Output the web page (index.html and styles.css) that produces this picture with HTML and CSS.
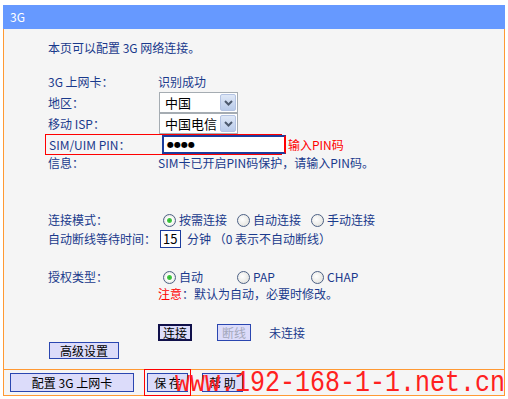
FILE: index.html
```html
<!DOCTYPE html>
<html lang="zh-CN">
<head>
    <meta charset="UTF-8">
    <title>3G</title>
    <link rel="stylesheet" href="styles.css">
</head>
<body>
    <div class="frame">
        <div class="title">3G</div>
        <div class="box">
            <div class="panel">
                <p class="intro">本页可以配置 3G 网络连接。</p>

                <div class="row row-card">
                    <span class="label">3G 上网卡：</span>
                    <span>识别成功</span>
                </div>
                <div class="row row-select">
                    <span class="label">地区：</span>
                    <div class="select">
                        <span class="select-text">中国</span>
                        <span class="select-btn">
                            <svg width="9" height="6" viewBox="0 0 9 6"><path d="M1 1 L4.5 4.5 L8 1" fill="none" stroke="#4d5a6e" stroke-width="2"/></svg>
                        </span>
                    </div>
                </div>
                <div class="row row-select">
                    <span class="label">移动 ISP：</span>
                    <div class="select">
                        <span class="select-text">中国电信</span>
                        <span class="select-btn">
                            <svg width="9" height="6" viewBox="0 0 9 6"><path d="M1 1 L4.5 4.5 L8 1" fill="none" stroke="#4d5a6e" stroke-width="2"/></svg>
                        </span>
                    </div>
                </div>
                <div class="row row-pin">
                    <div class="pin-mark">
                        <span class="label">SIM/UIM PIN：</span>
                        <span class="pin-input">●●●●</span>
                    </div>
                    <span class="hint">输入PIN码</span>
                </div>
                <div class="row row-info">
                    <span class="label">信息：</span>
                    <span>SIM卡已开启PIN码保护，请输入PIN码。</span>
                </div>

                <div class="row row-mode">
                    <span class="label">连接模式：</span>
                    <div class="radios">
                        <span class="radio"><i class="dot on"></i>按需连接</span>
                        <span class="radio"><i class="dot"></i>自动连接</span>
                        <span class="radio"><i class="dot"></i>手动连接</span>
                    </div>
                </div>
                <div class="row row-wait">
                    <span class="label">自动断线等待时间：</span>
                    <div class="wait">
                        <span class="num-input">15</span>
                        <span>分钟 （0 表示不自动断线）</span>
                    </div>
                </div>

                <div class="row row-auth">
                    <span class="label">授权类型：</span>
                    <div class="radios">
                        <span class="radio"><i class="dot on"></i>自动</span>
                        <span class="radio"><i class="dot"></i>PAP</span>
                        <span class="radio"><i class="dot"></i>CHAP</span>
                    </div>
                </div>
                <div class="row row-note">
                    <span class="label"></span>
                    <span><em class="warn">注意</em>：默认为自动，必要时修改。</span>
                </div>

                <div class="row row-btns">
                    <span class="label"></span>
                    <div class="conn">
                        <button class="button button-focus">连接</button>
                        <button class="button button-off">断线</button>
                        <span class="state">未连接</span>
                    </div>
                </div>
                <div class="row-adv">
                    <button class="button button-adv">高级设置</button>
                </div>
            </div>
            <div class="foot">
                <button class="button button-card">配置 3G 上网卡</button>
                <div class="save-mark">
                    <button class="button button-small">保 存</button>
                </div>
                <button class="button button-small">帮 助</button>
            </div>
        </div>
        <div class="watermark">www.192-168-1-1.net.cn</div>
    </div>
</body>
</html>
```

FILE: styles.css
```css
/* Reset */
* {
    box-sizing: border-box;
    margin: 0;
    padding: 0;
}

body {
    background-color: #fff;
    font-family: "Noto Sans CJK SC", "Noto Sans", sans-serif;
    font-size: 12px;
    line-height: 16px;
    color: #1a3a8c;
    overflow: hidden;
}

.frame {
    position: relative;
    width: 502px;
    margin: 5px 0 0 3px;
}

.title {
    height: 24px;
    line-height: 24px;
    padding-left: 7px;
    background-color: #6699ff;
    color: #fff;
}

.box {
    border: 1px solid #ff9933;
    border-top: none;
}

.panel {
    height: 340px;
    padding: 11px 0 0 44px;
    background-color: #f5f5f5;
}

.intro {
    height: 16px;
}

/* Form rows */
.row {
    display: grid;
    grid-template-columns: 110px auto;
    align-items: center;
}

.label {
    white-space: nowrap;
}

.row-card {
    height: 16px;
    margin-top: 18px;
}

.row-select {
    height: 21px;
}

.row-card + .row-select {
    margin-top: 2px;
}

.select {
    display: flex;
    align-items: center;
    justify-content: space-between;
    width: 79px;
    height: 21px;
    margin-left: 1px;
    padding: 1px 1px 1px 5px;
    background-color: #fff;
    border: 1px solid #a5acb2;
    color: #000;
    font-size: 13px;
}

.select-btn {
    display: flex;
    align-items: center;
    justify-content: center;
    width: 16px;
    height: 17px;
    background: linear-gradient(#dfe8f7, #b9cbea);
    border: 1px solid #b3c3e3;
    border-radius: 2px;
}

.row-pin {
    display: flex;
    height: 21px;
    margin-left: -3px;
}

.pin-mark {
    display: grid;
    grid-template-columns: 113px auto;
    align-items: center;
    width: 237px;
    height: 21px;
    padding-left: 3px;
    border: 1px solid #ff0000;
    border-right: none;
}

.pin-input {
    width: 124px;
    height: 19px;
    padding-left: 3px;
    border: 2px solid #1c3c9c;
    border-right-color: #ff0000;
    background-color: #fff;
    color: #000;
    font-family: "DejaVu Sans", sans-serif;
    font-size: 8px;
    line-height: 15px;
    letter-spacing: 0;
}

.hint {
    margin-left: 6px;
    color: #ff0000;
    line-height: 21px;
}

.row-info {
    height: 16px;
}

.row-mode {
    height: 16px;
    margin-top: 41px;
}

.radios {
    display: grid;
    grid-template-columns: 74px 74px 74px;
}

.radio {
    display: flex;
    align-items: center;
    gap: 3px;
    padding-left: 5px;
}

.dot {
    display: block;
    width: 13px;
    height: 13px;
    border: 1px solid #4d6185;
    border-radius: 50%;
    background: radial-gradient(circle at 40% 40%, #fff, #dcdcd6);
}

.dot.on {
    background: radial-gradient(circle, #2bb52b 0, #49c849 2px, #fff 3px, #e4e4de 6px);
}

.row-wait {
    height: 19px;
    margin-top: 1px;
}

.wait {
    display: flex;
    align-items: center;
    gap: 6px;
}

.num-input {
    width: 21px;
    height: 18px;
    margin-left: 2px;
    padding-left: 2px;
    line-height: 16px;
    background-color: #fff;
    border: 1px solid #1c3c9c;
    color: #000;
    font-size: 13px;
}

.row-auth {
    height: 16px;
    margin-top: 21px;
}

.row-note {
    height: 16px;
    margin-top: 1px;
}

.warn {
    font-style: normal;
    color: #ff0000;
}

.row-btns {
    height: 16px;
    margin-top: 22px;
}

.conn {
    display: flex;
    align-items: center;
}

.state {
    margin-left: 18px;
}

.row-adv {
    margin-top: 2px;
    padding-left: 1px;
}

/* Buttons */
.button {
    height: 17px;
    font-family: "Noto Sans CJK SC", "Noto Sans", sans-serif;
    font-size: 12px;
    line-height: 14px;
    color: #000;
    background-color: #dcdcfa;
    border: 1px solid #2a46b0;
    cursor: pointer;
}

.button-focus {
    width: 34px;
    border: 2px solid #10104a;
}

.button-off {
    width: 34px;
    margin-left: 25px;
    color: #a4a8bc;
}

.button-adv {
    width: 70px;
}

.foot {
    display: flex;
    align-items: center;
    height: 26px;
    padding-left: 6px;
    border-top: 1px solid #ff9933;
    background-color: #f5f5f5;
}

.button-card {
    width: 124px;
    height: 19px;
}

.button-small {
    width: 41px;
    height: 19px;
}

.save-mark {
    display: flex;
    align-items: center;
    height: 27px;
    margin: 0 11px 0 10px;
    padding: 0 2px;
    border: 1px solid #ff0000;
}

.watermark {
    position: absolute;
    left: 172px;
    top: 362px;
    white-space: nowrap;
    font-family: "Liberation Mono", monospace;
    font-size: 25px;
    line-height: 28px;
    color: #ff2020;
    transform: scaleY(1.2);
    transform-origin: left top;
    pointer-events: none;
}
```
